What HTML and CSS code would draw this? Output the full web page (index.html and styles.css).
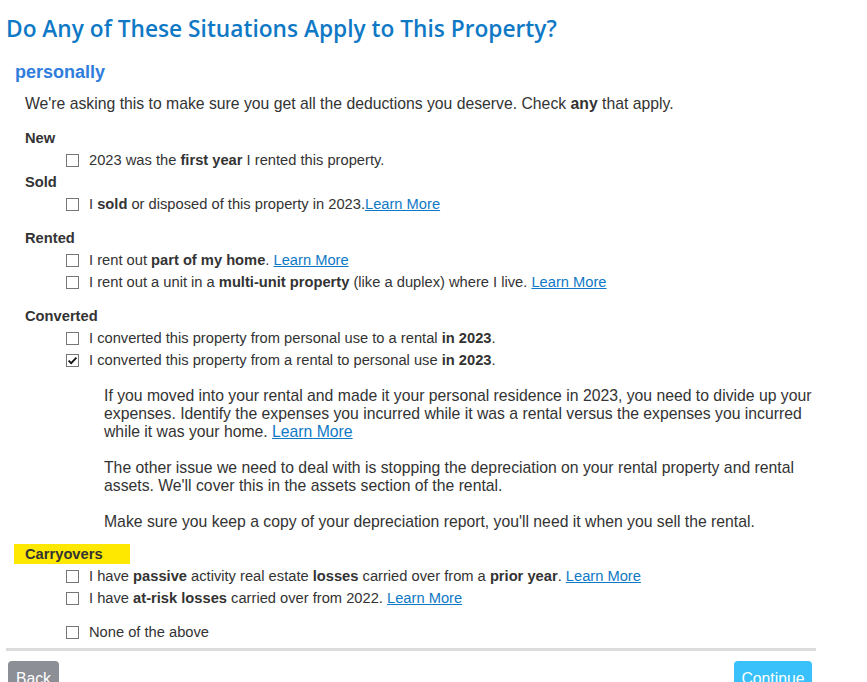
FILE: index.html
```html
<!DOCTYPE html>
<html>
<head>
<meta charset="utf-8">
<link rel="stylesheet" href="styles.css">
</head>
<body>
<div class="page">
  <h1 class="title">Do Any of These Situations Apply to This Property?</h1>
  <h2 class="subtitle">personally</h2>
  <div class="content">
    <p class="intro">We're asking this to make sure you get all the deductions you deserve. Check <b>any</b> that apply.</p>

    <div class="group">
      <div class="label">New</div>
      <div class="row"><span class="box"></span><span>2023 was the <b>first year</b> I rented this property.</span></div>
    </div>
    <div class="group tight">
      <div class="label">Sold</div>
      <div class="row"><span class="box"></span><span>I <b>sold</b> or disposed of this property in 2023.<a href="#">Learn More</a></span></div>
    </div>
    <div class="group">
      <div class="label">Rented</div>
      <div class="row"><span class="box"></span><span>I rent out <b>part of my home</b>. <a href="#">Learn More</a></span></div>
      <div class="row"><span class="box"></span><span>I rent out a unit in a <b>multi-unit property</b> (like a duplex) where I live. <a href="#">Learn More</a></span></div>
    </div>
    <div class="group">
      <div class="label">Converted</div>
      <div class="row"><span class="box"></span><span>I converted this property from personal use to a rental <b>in 2023</b>.</span></div>
      <div class="row"><span class="box checked"><svg viewBox="0 0 13 13" width="13" height="13"><path d="M2.6 6.6 L5.2 9.2 L10.4 3.6" fill="none" stroke="#111" stroke-width="1.8"/></svg></span><span>I converted this property from a rental to personal use <b>in 2023</b>.</span></div>
      <div class="detail">
        <p>If you moved into your rental and made it your personal residence in 2023, you need to divide up your expenses. Identify the expenses you incurred while it was a rental versus the expenses you incurred while it was your home. <a href="#">Learn More</a></p>
        <p>The other issue we need to deal with is stopping the depreciation on your rental property and rental assets. We'll cover this in the assets section of the rental.</p>
        <p>Make sure you keep a copy of your depreciation report, you'll need it when you sell the rental.</p>
      </div>
    </div>
    <div class="group carry">
      <div class="label highlight">Carryovers</div>
      <div class="row"><span class="box"></span><span>I have <b>passive</b> activity real estate <b>losses</b> carried over from a <b>prior year</b>. <a href="#">Learn More</a></span></div>
      <div class="row"><span class="box"></span><span>I have <b>at-risk losses</b> carried over from 2022. <a href="#">Learn More</a></span></div>
    </div>
    <div class="group">
      <div class="row"><span class="box"></span><span>None of the above</span></div>
    </div>
  </div>
  <hr class="divider">
  <div class="actions">
    <button class="btn back">Back</button>
    <button class="btn continue">Continue</button>
  </div>
</div>
</body>
</html>
```

FILE: styles.css
```css
html, body {
  margin: 0;
  padding: 0;
  background: #fff;
}
body {
  font-family: "Liberation Sans", Arial, sans-serif;
  font-size: 15.75px;
  color: #333;
}
.page {
  padding: 14px 0 0 6px;
  width: 810px;
}
.title {
  font-family: "Open Sans", "Noto Sans", sans-serif;
  font-weight: 600;
  font-size: 22.7px;
  line-height: 30px;
  color: #0f79c6;
  margin: 0;
}
.subtitle {
  font-family: "Liberation Sans", Arial, sans-serif;
  font-weight: bold;
  font-size: 18px;
  line-height: 24px;
  color: #2f7ddc;
  margin: 16px 0 0 9px;
}
.content {
  padding-left: 19px;
}
.intro {
  margin: 9px 0 0 0;
  line-height: 22px;
}
.group {
  margin-top: 12px;
}
.group.tight {
  margin-top: 0;
}
.group.carry {
  margin-top: 13px;
}
.label {
  font-weight: bold;
  font-size: 14.7px;
  line-height: 22px;
}
.label.highlight {
  background: #ffe800;
  width: 105px;
  margin-left: -11px;
  padding-left: 11px;
  line-height: 20px;
  margin-bottom: 1px;
}
.row {
  display: flex;
  align-items: center;
  gap: 10px;
  font-size: 14.7px;
  line-height: 22px;
  padding-left: 41px;
}
.box {
  width: 13px;
  height: 13px;
  border: 1px solid #767676;
  box-sizing: border-box;
  flex: none;
  position: relative;
}
.box svg {
  position: absolute;
  left: -1px;
  top: -1px;
}
a {
  color: #0f79c6;
  text-decoration: underline;
}
.detail {
  padding-left: 79px;
  padding-top: 16px;
  line-height: 18px;
}
.detail p {
  margin: 0 0 18px 0;
}
.detail p:last-child {
  margin-bottom: 0;
}
.divider {
  border: none;
  height: 3px;
  background: #dcdcdc;
  margin: 5px 0 0 0;
}
.actions {
  display: flex;
  justify-content: space-between;
  padding: 10px 4px 0 2px;
}
.btn {
  font-family: "Liberation Sans", Arial, sans-serif;
  font-size: 15.75px;
  color: #fff;
  border: none;
  border-radius: 4px;
  height: 36px;
  padding: 0;
}
.btn.back {
  background: #8c8f95;
  width: 51px;
}
.btn.continue {
  background: #38c1fb;
  width: 78px;
}
```
